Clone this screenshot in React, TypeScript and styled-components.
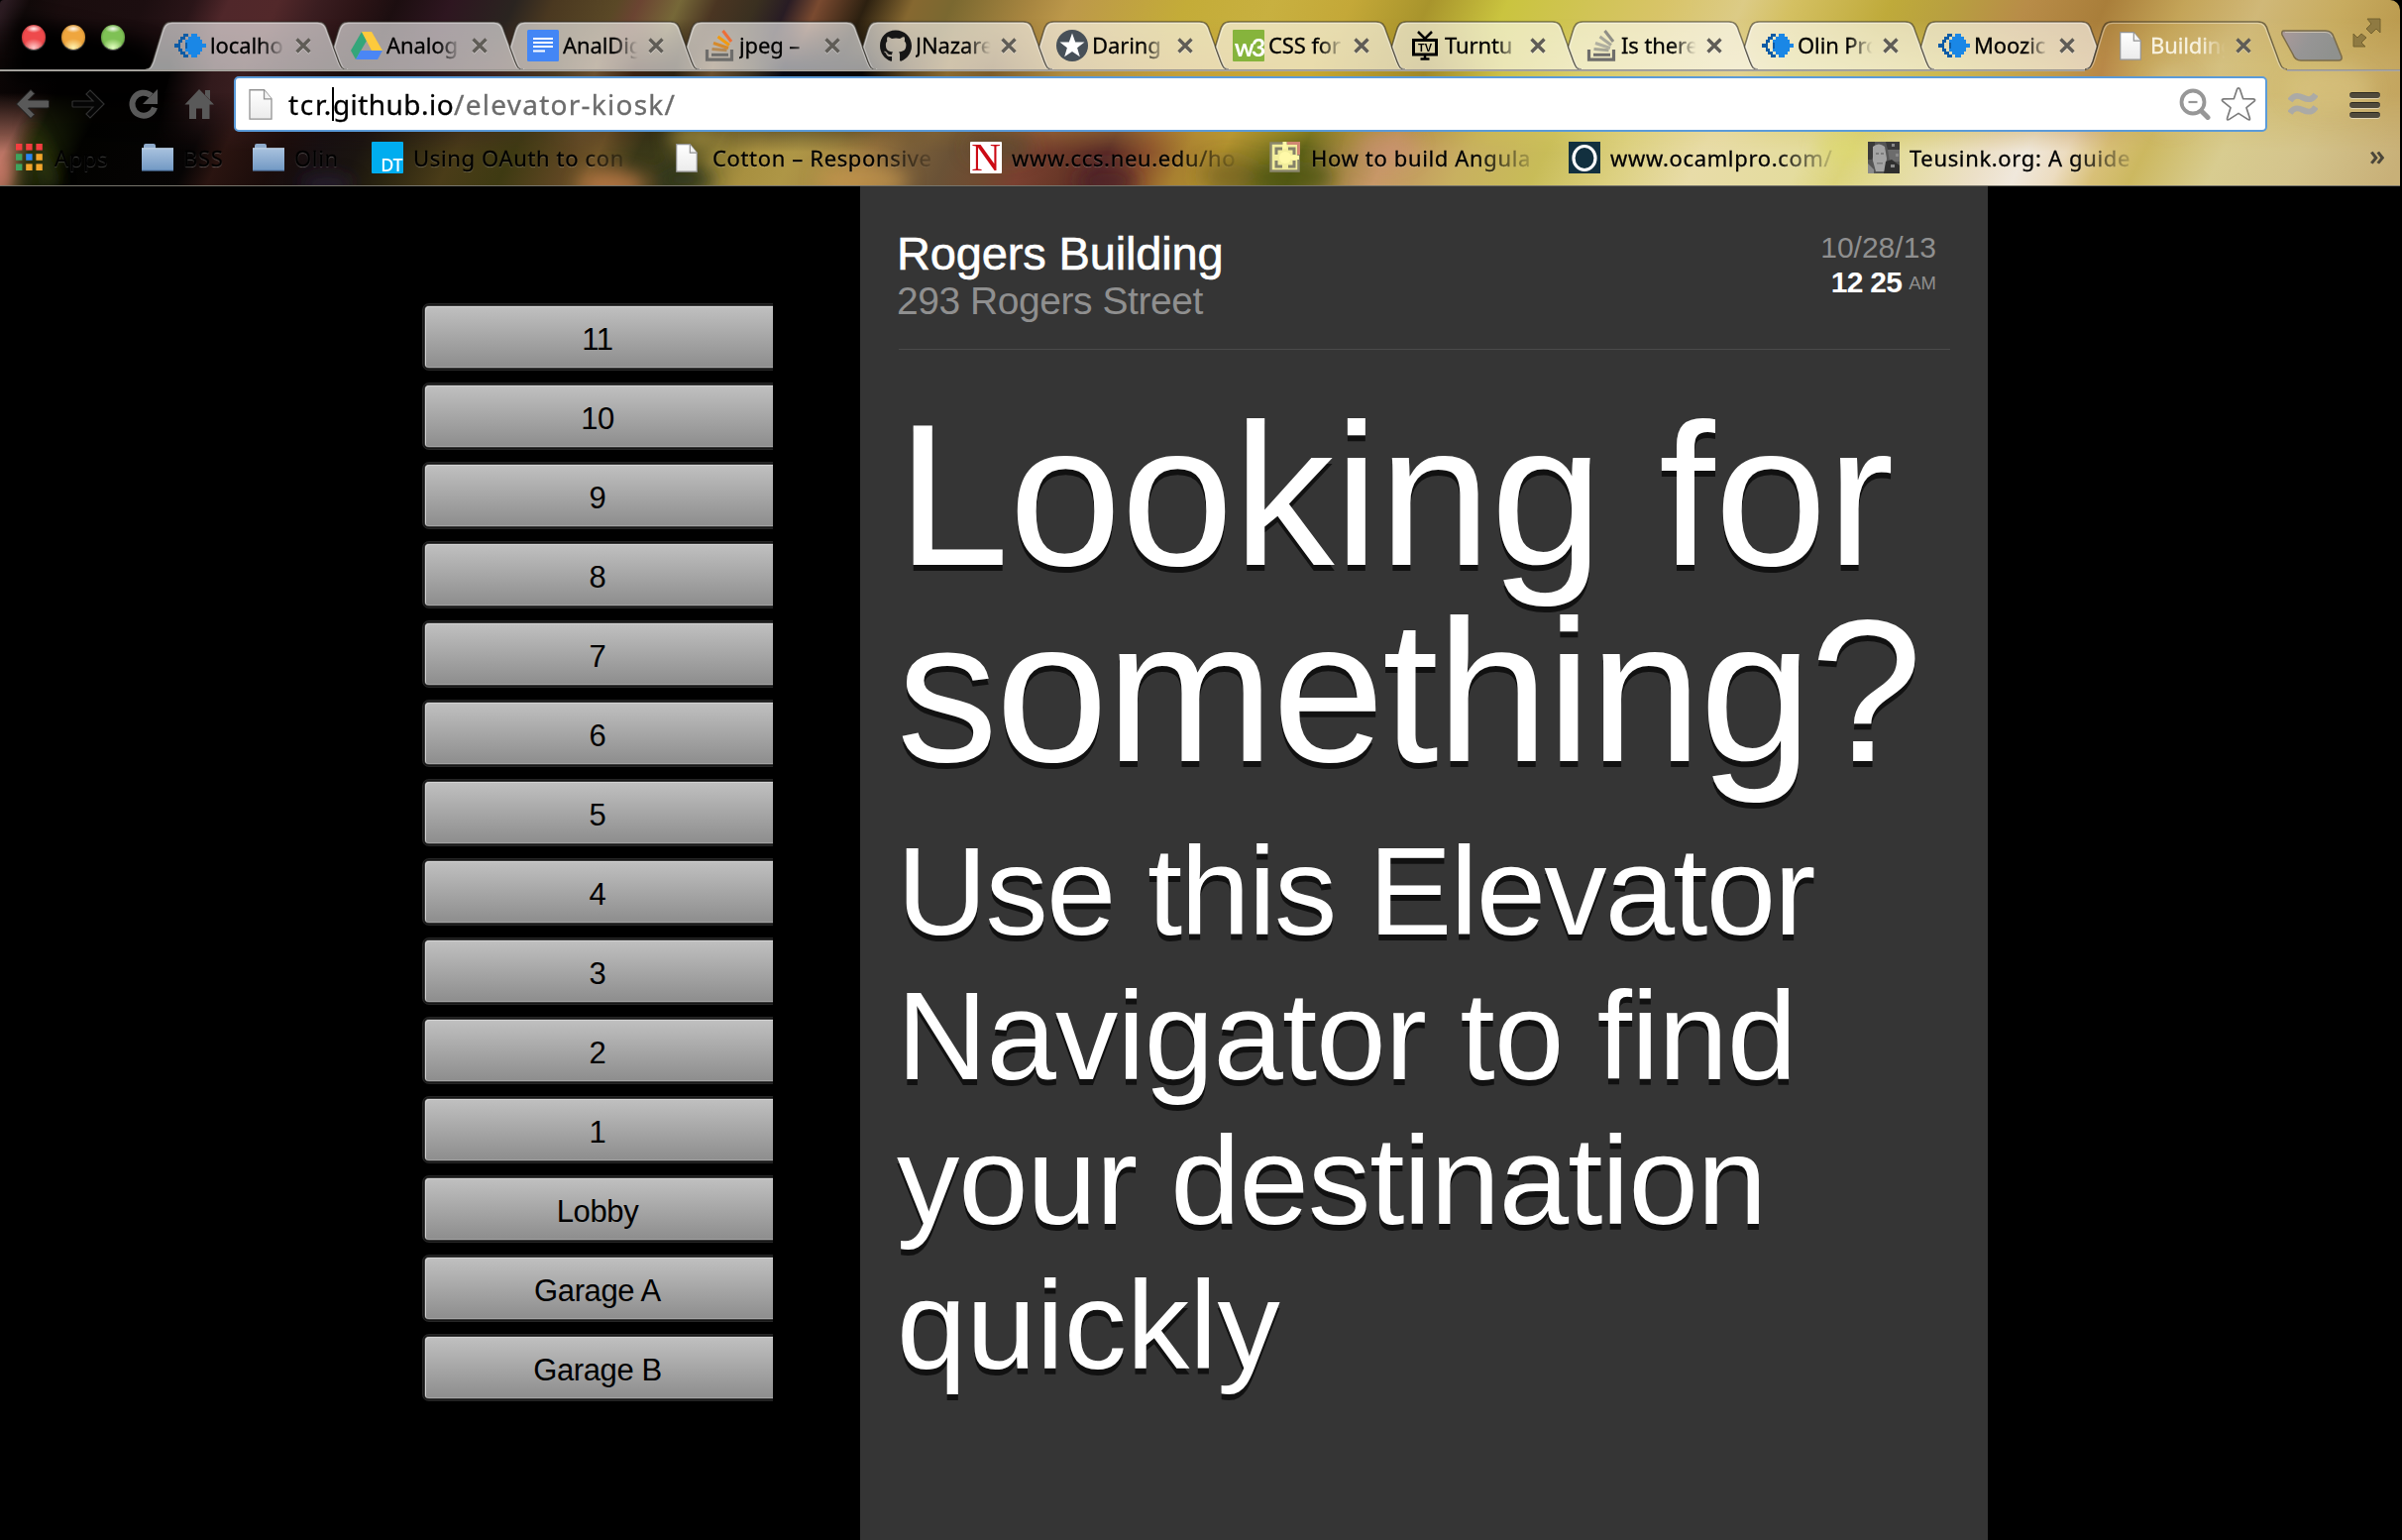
import React from 'react';
import styled, { createGlobalStyle } from 'styled-components';
import { FaGithub } from 'react-icons/fa';

const uiFont = '"Noto Sans", "Open Sans", sans-serif';
const pageFont = '"Liberation Sans", Arial, sans-serif';

const GlobalStyle = createGlobalStyle`
  *, *::before, *::after { box-sizing: border-box; }
  html, body { margin: 0; padding: 0; background: #000; }
  body { overflow: hidden; }
  h1, h2, p, ul { margin: 0; padding: 0; font-weight: 400; }
`;

const Window = styled.div`
  width: 2424px;
  height: 1554px;
  display: flex;
  flex-direction: column;
  background: #000;
  overflow: hidden;
`;

/* ---------- browser chrome ---------- */

const Chrome = styled.header`
  position: relative;
  width: 2422px;
  height: 188px;
  flex: none;
  display: flex;
  flex-direction: column;
  border-bottom: 1px solid #77756c;
  border-radius: 4px 10px 0 0;
  overflow: hidden;
  font-family: ${uiFont};
`;

const ThemePhoto = styled.svg`
  position: absolute;
  inset: 0;
  width: 100%;
  height: 100%;
`;

const TabStrip = styled.div`
  position: relative;
  display: flex;
  height: 72px;
  flex: none;
`;

const WindowControls = styled.div`
  width: 146px;
  display: flex;
  gap: 16px;
  padding: 25px 0 0 22px;
  flex: none;
`;

const Light = styled.span<{ $edge: string; $core: string; $glow: string }>`
  width: 24px;
  height: 25px;
  border-radius: 50%;
  background:
    radial-gradient(ellipse 8px 4px at 50% 16%, rgba(255, 255, 255, 0.9), rgba(255, 255, 255, 0) 100%),
    radial-gradient(ellipse 11px 9px at 50% 92%, ${p => p.$glow}, transparent 100%),
    radial-gradient(circle at 50% 50%, ${p => p.$core} 55%, ${p => p.$edge} 100%);
  box-shadow: 0 1px 1px rgba(255, 255, 255, 0.35);
`;

const TabItem = styled.div`
  position: relative;
  width: 178px;
  flex: none;
  display: flex;
  align-items: center;
  padding: 20px 0 0 30px;
`;

const TabShape = styled.svg`
  position: absolute;
  left: 0;
  top: 20px;
  width: 206px;
  height: 52px;
  overflow: visible;
`;

const IconBox = styled.span`
  position: relative;
  width: 32px;
  height: 32px;
  flex: none;
  display: flex;
  align-items: center;
  justify-content: center;
`;

const TabLabel = styled.span<{ $light?: boolean }>`
  position: relative;
  width: 78px;
  margin: -2px 0 0 4px;
  overflow: hidden;
  white-space: nowrap;
  font-size: 22px;
  line-height: 30px;
  letter-spacing: -0.1px;
  color: ${p => (p.$light ? '#f8f2e0' : '#000')};
  -webkit-text-stroke: 0.3px currentColor;
  mask-image: linear-gradient(90deg, #000 66%, transparent 97%);
`;

const CloseMark = styled.svg`
  position: relative;
  width: 16px;
  height: 16px;
  margin-left: 8px;
  flex: none;
  filter: drop-shadow(0 1px 0 rgba(255, 255, 255, 0.4));
`;

const StripEnd = styled.div`
  position: relative;
  flex: 1;
  display: flex;
  padding-left: 18px;
`;

const NewTab = styled.svg`
  width: 66px;
  height: 34px;
  margin-top: 29px;
`;

const FullScreen = styled.svg`
  width: 29px;
  height: 30px;
  margin: 18px 0 0 8px;
`;

const Toolbar = styled.div`
  position: relative;
  display: flex;
  align-items: center;
  height: 66px;
  flex: none;
  padding-left: 15px;
`;

const NavIcon = styled.svg`
  width: 36px;
  height: 36px;
  margin-right: 20px;
  flex: none;
`;

const Omnibox = styled.div`
  display: flex;
  align-items: center;
  width: 2052px;
  height: 56px;
  margin-left: -3px;
  padding-left: 13px;
  flex: none;
  background: #fff;
  border: 2px solid #5b9bd9;
  border-radius: 5px;
`;

const Url = styled.div`
  flex: 1;
  display: flex;
  align-items: center;
  padding-left: 16px;
  font-size: 28px;
  line-height: 38px;
  white-space: nowrap;
  color: #000;
`;

const Host = styled.span<{ $tracking: number }>`
  letter-spacing: ${p => p.$tracking}px;
  -webkit-text-stroke: 0.3px currentColor;
`;

const Path = styled.span`
  letter-spacing: 1.25px;
  color: #6c6c6c;
  -webkit-text-stroke: 0.3px currentColor;
`;

const Caret = styled.i`
  width: 2px;
  height: 34px;
  margin: 0 -1px;
  background: #000;
`;

const ZoomGlyph = styled.svg`
  width: 32px;
  height: 32px;
  margin-right: 10px;
`;

const StarGlyph = styled.svg`
  width: 36px;
  height: 36px;
  margin-right: 9px;
`;

const Waves = styled.svg`
  width: 30px;
  height: 26px;
  margin-left: 21px;
`;

const Menu = styled.span`
  display: flex;
  flex-direction: column;
  gap: 4px;
  margin: 1px 0 0 32px;
`;

const MenuBar = styled.i`
  width: 31px;
  height: 6px;
  border-radius: 3px;
  background: #504a3c;
  border-top: 1px solid #2b281f;
  box-shadow: 0 1px 0 rgba(255, 255, 255, 0.45);
`;

const BookmarkBar = styled.div`
  position: relative;
  display: flex;
  height: 42px;
  flex: none;
  padding-left: 13px;
`;

const Bookmark = styled.div<{ $width: number }>`
  display: flex;
  align-items: center;
  width: ${p => p.$width}px;
  flex: none;
`;

const BookmarkLabel = styled.span<{ $fade?: boolean }>`
  margin-left: 10px;
  width: ${p => (p.$fade ? '236px' : 'auto')};
  overflow: hidden;
  white-space: nowrap;
  font-size: 22px;
  line-height: 30px;
  letter-spacing: 0.65px;
  color: #000;
  -webkit-text-stroke: 0.3px #000;
  text-shadow: 0 1px 1px rgba(255, 255, 255, 0.28);
  mask-image: ${p => (p.$fade ? 'linear-gradient(90deg, #000 70%, transparent 99%)' : 'none')};
`;

const Overflow = styled.span`
  margin-left: 204px;
  font-size: 28px;
  line-height: 36px;
  color: #4b463a;
  font-weight: 600;
`;

const Tile = styled.span<{ $bg: string; $fg: string }>`
  width: 32px;
  height: 32px;
  display: flex;
  align-items: flex-end;
  justify-content: flex-end;
  background: ${p => p.$bg};
  color: ${p => p.$fg};
  border-radius: 1px;
`;

const DtText = styled.span`
  font: 500 18px/18px ${uiFont};
  letter-spacing: -0.5px;
  padding-right: 1px;
`;

const NText = styled.span`
  width: 32px;
  text-align: center;
  font: 400 41px/33px "Liberation Serif", serif;
`;

const W3Text = styled.span`
  width: 32px;
  text-align: center;
  font: 700 25px/30px "Lato", sans-serif;
  letter-spacing: -3px;
`;

/* ---------- kiosk page ---------- */

const Kiosk = styled.main`
  flex: 1;
  display: flex;
  background: #000;
  font-family: ${pageFont};
`;

const FloorList = styled.nav`
  width: 780px;
  flex: none;
  display: flex;
  flex-direction: column;
  gap: 18px;
  padding: 121px 0 0 429px;
  overflow: hidden;
`;

const FloorButton = styled.button`
  height: 62px;
  flex: none;
  padding: 5px 3px 0 0;
  border: 0;
  border-radius: 4px 0 0 4px;
  background: linear-gradient(#c0c0c0, #8d8d8d);
  box-shadow:
    inset 1px 1px 0 #d2d2d2,
    inset 0 -1px 0 #a2a2a2,
    0 0 0 1px #3a3a3a,
    0 0 0 2px #161616,
    0 0 0 3px #262626;
  color: #000;
  font-family: ${pageFont};
  font-size: 31px;
  line-height: 36px;
  letter-spacing: -0.4px;
`;

const Panel = styled.section`
  width: 1138px;
  margin-left: 88px;
  flex: none;
  padding: 44px 38px 0 37px;
  background: #353535;
`;

const PanelHeader = styled.div`
  display: flex;
  justify-content: space-between;
  height: 120px;
`;

const BuildingName = styled.h1`
  font-size: 47px;
  line-height: 48px;
  letter-spacing: -0.15px;
  color: #fff;
  -webkit-text-stroke: 0.6px #fff;
`;

const Address = styled.p`
  font-size: 39px;
  line-height: 47px;
  letter-spacing: -0.45px;
  color: #8f8f8f;
`;

const Clock = styled.div`
  padding: 1px 14px 0 0;
  text-align: right;
  font-size: 30px;
  line-height: 34px;
  color: #8f8f8f;
`;

const Time = styled.div`
  display: flex;
  justify-content: flex-end;
  align-items: center;
  gap: 7px;
  margin-top: -1px;
`;

const Digits = styled.b`
  color: #fff;
  letter-spacing: -0.7px;
`;

const Meridiem = styled.span`
  font-size: 18.5px;
  line-height: 34px;
  padding-top: 3px;
`;

const Divider = styled.div`
  height: 1px;
  margin-left: 2px;
  background: #4a4a4a;
`;

const Headline = styled.h2`
  margin-top: 47px;
  font-size: 204px;
  line-height: 198px;
  color: #fff;
  text-shadow: 0 6px 0 #111;
`;

const Intro = styled.p`
  margin-top: 30px;
  font-size: 126.5px;
  line-height: 146px;
  color: #fff;
  text-shadow: 0 6px 0 #111;
`;

const Line = styled.span<{ $tracking: number }>`
  display: block;
  white-space: nowrap;
  letter-spacing: ${p => p.$tracking}px;
`;

/* ---------- theme photo data ---------- */

type Stop = [number, string];

const topBand: Stop[] = [
  [0, '#2c1c22'], [24, '#120a0a'], [60, '#1a0d0e'], [140, '#1c0e10'], [190, '#2a1518'], [225, '#50272a'], [275, '#52282a'],
  [316, '#3a1d20'], [356, '#2c1416'], [395, '#1c0e10'], [450, '#2e1620'], [514, '#2a2420'], [553, '#4a3820'],
  [617, '#5a4826'], [640, '#6b4432'], [680, '#766838'], [718, '#4a3522'], [758, '#3a3020'], [790, '#281c24'],
  [821, '#7a4a30'], [869, '#2c2010'], [916, '#866830'], [956, '#7a6830'], [1035, '#a88640'], [1075, '#bc984a'],
  [1193, '#c4ac38'], [1279, '#c8b040'], [1358, '#c4a838'], [1437, '#a8942c'], [1516, '#cac43f'], [1595, '#d0c454'],
  [1674, '#d8c468'], [1754, '#dccb86'], [1804, '#d4c062'], [1903, '#bfaa3a'], [1962, '#b8a040'], [2041, '#b88c48'],
  [2120, '#a97e3a'], [2199, '#c4a458'], [2278, '#d0b878'], [2357, '#c8ac60'], [2422, '#bc9c50'],
];

const midBand: Stop[] = [
  [0, '#0c0606'], [60, '#020101'], [170, '#020101'], [215, '#321a1c'], [245, '#3a1e20'], [290, '#2a1416'], [350, '#1a0d0c'],
  [420, '#261418'], [500, '#3a2420'], [560, '#4a3820'], [600, '#6a5030'], [640, '#3a2212'], [680, '#2c2212'],
  [718, '#6a5030'], [758, '#3a3020'], [790, '#080812'], [870, '#080604'], [916, '#5a4420'], [956, '#8a6a30'],
  [1000, '#7c5c2a'], [1075, '#b08c40'], [1193, '#c4a038'], [1279, '#c8a634'], [1320, '#c8a830'], [1437, '#a08828'],
  [1516, '#ccc048'], [1595, '#d8cc68'], [1754, '#e2d290'], [1804, '#d8cc72'], [1962, '#ccb850'], [2080, '#c09848'],
  [2120, '#b88848'], [2160, '#c6a65c'], [2239, '#d4c080'], [2318, '#d0ba70'], [2422, '#c4a660'],
];

const lowBand: Stop[] = [
  [0, '#b07060'], [16, '#5a4428'], [26, '#28300e'], [50, '#161c06'], [75, '#020200'], [190, '#060404'], [221, '#2a1410'],
  [277, '#1a0c0a'], [316, '#171012'], [356, '#1a1410'], [395, '#2a2410'], [455, '#4a3c18'], [514, '#3e3a12'],
  [573, '#5e4622'], [600, '#6e5428'], [640, '#3a3818'], [690, '#3c3c1a'], [718, '#8a7a34'], [758, '#a89040'],
  [798, '#ae9646'], [837, '#a88c44'], [877, '#9a7640'], [910, '#7c603a'], [956, '#6a5236'], [1000, '#704a30'],
  [1035, '#7a4030'], [1075, '#6a3828'], [1114, '#5a2c28'], [1154, '#8a502c'], [1193, '#a88030'], [1230, '#b09030'],
  [1279, '#7a7420'], [1310, '#5c6018'], [1350, '#a08440'], [1398, '#c89868'], [1437, '#c4a060'], [1477, '#c8b060'],
  [1556, '#c8bc58'], [1635, '#dcd080'], [1714, '#e8dca8'], [1817, '#e4dc9e'], [1863, '#dcd47c'], [1923, '#e4dca0'],
  [2002, '#ece0c8'], [2041, '#f0e8dc'], [2081, '#ecdcc0'], [2120, '#d8c078'], [2160, '#ccb860'], [2239, '#d8cc90'],
  [2318, '#d4c48c'], [2422, '#c8b078'],
];

const Band = ({ id, stops, lean }: { id: string; stops: Stop[]; lean: string }) => (
  <linearGradient id={id} gradientUnits="userSpaceOnUse" x1="0" y1="0" x2="2422" y2="0" gradientTransform={lean}>
    {stops.map(([x, c]) => <stop key={x} offset={x / 2422} stopColor={c} />)}
  </linearGradient>
);

const Photo = () => (
  <ThemePhoto viewBox="0 0 2422 188" preserveAspectRatio="none">
    <defs>
      <Band id="bandTop" stops={topBand} lean="translate(0 15) skewX(-24) translate(0 -15)" />
      <Band id="bandMid" stops={midBand} lean="translate(0 75) skewX(-12) translate(0 -75)" />
      <Band id="bandLow" stops={lowBand} lean="translate(0 162) skewX(-26) translate(0 -162)" />
      <linearGradient id="fadeMid" x1="0" y1="0" x2="0" y2="1">
        <stop offset="0.1" stopColor="#000" />
        <stop offset="0.36" stopColor="#fff" />
      </linearGradient>
      <linearGradient id="fadeLow" x1="0" y1="0" x2="0" y2="1">
        <stop offset="0.5" stopColor="#000" />
        <stop offset="0.82" stopColor="#fff" />
      </linearGradient>
      <mask id="maskMid"><rect width="2422" height="188" fill="url(#fadeMid)" /></mask>
      <mask id="maskLow"><rect width="2422" height="188" fill="url(#fadeLow)" /></mask>
      <filter id="soft" x="-50%" y="-50%" width="200%" height="200%"><feGaussianBlur stdDeviation="9" /></filter>
    </defs>
    <rect width="2422" height="188" fill="url(#bandTop)" />
    <rect width="2422" height="188" fill="url(#bandMid)" mask="url(#maskMid)" />
    <rect width="2422" height="188" fill="url(#bandLow)" mask="url(#maskLow)" />
    <g filter="url(#soft)">
      <path d="M18 18 L150 46 L150 80 L12 80 Z" fill="#000" />
      <ellipse cx="2" cy="180" rx="12" ry="26" fill="#d88070" opacity="0.8" />
      <path d="M30 120 L60 190 L46 190 Z" fill="#3c4a14" />
      <ellipse cx="330" cy="188" rx="26" ry="9" fill="#30284c" opacity="0.6" />
      <ellipse cx="618" cy="188" rx="34" ry="16" fill="#c8804a" opacity="0.8" />
      <ellipse cx="690" cy="182" rx="30" ry="14" fill="#30381a" />
      <ellipse cx="700" cy="140" rx="26" ry="12" fill="#b09a44" opacity="0.7" />
      <ellipse cx="870" cy="184" rx="46" ry="18" fill="#c8984e" opacity="0.7" />
      <ellipse cx="1010" cy="150" rx="34" ry="12" fill="#5c4a30" opacity="0.8" />
      <ellipse cx="1118" cy="184" rx="30" ry="18" fill="#4c2028" opacity="0.8" />
      <ellipse cx="1240" cy="178" rx="30" ry="18" fill="#6e5a1c" opacity="0.6" />
      <ellipse cx="1304" cy="180" rx="44" ry="16" fill="#4e5414" opacity="0.8" />
      <ellipse cx="1400" cy="150" rx="30" ry="16" fill="#c89070" opacity="0.6" />
      <ellipse cx="1860" cy="150" rx="26" ry="16" fill="#dcd86c" opacity="0.6" />
      <ellipse cx="2190" cy="100" rx="24" ry="30" fill="#dccb90" opacity="0.5" />
      <ellipse cx="2350" cy="90" rx="44" ry="22" fill="#dcc888" opacity="0.5" />
    </g>
  </ThemePhoto>
);

/* ---------- icons ---------- */

const Pixels = () => (
  <svg width="32" height="26" viewBox="0 0 32 26">
    <path d="M9 1h5v3h-3v3H8v3H6v6h2v3h3v3h3v3H9v-3H6v-3H4v-4H0V11h4V7h2V4h3z" fill="#0d5ba5" />
    <path d="M14 4h3V1h6v3h3v3h2v4h4v4h-4v4h-2v3h-3v3h-6v-3h-3v-3h-3V7h3z" fill="#1a87e6" />
    <path d="M11 10h2v6h-2z" fill="#0d5ba5" />
  </svg>
);

const Drive = () => (
  <svg width="32" height="28" viewBox="0 0 32 28">
    <path d="M11 0 0 19l5 9L16 9z" fill="#34a67a" />
    <path d="M11 0h10l11 19H21z" fill="#fdca3d" />
    <path d="M10 19h22l-5 9H5z" fill="#4a86f5" />
  </svg>
);

const Docs = () => (
  <svg width="32" height="32" viewBox="0 0 32 32">
    <rect width="32" height="32" rx="1.5" fill="#4386f5" />
    <path d="M6 9h20M6 13h20M6 17h20M6 21.500h12" stroke="#fff" strokeWidth="2" />
  </svg>
);

const Stack = ({ muted }: { muted?: boolean }) => (
  <svg width="32" height="32" viewBox="0 0 32 32" fill="none">
    <path d="M3.500 20v10.200h25V20" stroke="#6e6d6b" strokeWidth="3.200" />
    <path d="M8 25.300h17" stroke="#6e6d6b" strokeWidth="3" />
    <path d="M8.500 19.500l15 1.200" stroke={muted ? '#a6a596' : '#b58a55'} strokeWidth="3" />
    <path d="M10 13.500l15 5" stroke={muted ? '#b0afa0' : '#d68a2c'} strokeWidth="3" />
    <path d="M14.500 7l11.500 8.500" stroke={muted ? '#a8a79a' : '#f29a10'} strokeWidth="3" />
    <path d="M19.500 1l8.500 11" stroke={muted ? '#8f8e86' : '#ee6e37'} strokeWidth="3" />
  </svg>
);

const StarBadge = () => (
  <svg width="32" height="32" viewBox="0 0 32 32">
    <circle cx="16" cy="16" r="16" fill="#475058" />
    <path d="M16 3.500l3.200 9h9.300l-7.400 5.700 2.700 9L16 21.900l-7.800 5.300 2.700-9-7.400-5.700h9.300z" fill="#fff" />
  </svg>
);

const Tv = () => (
  <svg width="26" height="30" viewBox="0 0 26 30">
    <path d="M6 1l7 7 7-7" stroke="#000" strokeWidth="2.500" fill="none" />
    <path d="M1.500 9.500h23v14.500h-23z" stroke="#000" strokeWidth="3" fill="none" />
    <path d="M13 24v5M8.500 28.500h9" stroke="#000" strokeWidth="2.500" />
    <text x="13" y="21.300" textAnchor="middle" fontFamily="Liberation Sans, sans-serif" fontWeight="700" fontSize="11">TV</text>
  </svg>
);

const PageGlyph = ({ w = 22, h = 29 }: { w?: number; h?: number }) => (
  <svg width={w} height={h} viewBox="0 0 22 29">
    <defs>
      <linearGradient id="paper" x1="0" y1="0" x2="0" y2="1">
        <stop offset="0" stopColor="#fff" /><stop offset="1" stopColor="#ebebeb" />
      </linearGradient>
    </defs>
    <path d="M.7.7h13.600l7 8.500v19H.7z" fill="url(#paper)" stroke="#929292" strokeWidth="1.200" />
    <path d="M14.300.7v8.500h7" fill="#f4f4f4" stroke="#929292" strokeWidth="1.200" />
  </svg>
);

const Folder = () => (
  <svg width="32" height="28" viewBox="0 0 32 28">
    <defs>
      <linearGradient id="folder" x1="0" y1="0" x2="0" y2="1">
        <stop offset="0" stopColor="#a9c2de" /><stop offset="1" stopColor="#7299c4" />
      </linearGradient>
    </defs>
    <path d="M2 5V2q0-2 2-2h8q2 0 2 2v3z" fill="#8fabcb" />
    <path d="M0 4.500h32V27H0z" fill="url(#folder)" />
    <path d="M0 4.800h32" stroke="#c3d6ea" />
    <path d="M0 27h32" stroke="#577fad" strokeWidth="1.200" />
  </svg>
);

const appColors = ['#f33d3f', '#f33d3f', '#f33d3f', '#3fa35d', '#2a86f2', '#f3a52b', '#3fa35d', '#f3a52b', '#f3a52b'];

const Apps = () => (
  <svg width="28" height="28" viewBox="0 0 28 28">
    {appColors.map((c, i) => (
      <rect key={i} x={1 + (i % 3) * 10.200} y={Math.floor(i / 3) * 10.200} width="6.400" height="6.600" fill={c} />
    ))}
  </svg>
);

const Target = () => (
  <svg width="32" height="32" viewBox="0 0 32 32">
    <rect x="1.500" y="1.500" width="28" height="28" fill="#f3ee9c" stroke="#8b876d" strokeWidth="2.500" />
    <path d="M18 1.500h11.500V13" stroke="#cf8672" strokeWidth="3" fill="none" />
    <path d="M7 13V7h6M19 7h6v6M25 19v6h-6M13 25H7v-6" stroke="#85826a" strokeWidth="3" fill="none" />
    <path d="M15.500 0v7M22 16h8" stroke="#fff8a6" strokeWidth="4" />
    <circle cx="16" cy="16" r="6" fill="#fff9a8" />
  </svg>
);

const Ring = () => (
  <svg width="32" height="32" viewBox="0 0 32 32">
    <rect width="32" height="32" fill="#12303f" />
    <ellipse cx="16" cy="16.500" rx="11" ry="12" fill="none" stroke="#fff" strokeWidth="3.200" />
  </svg>
);

const Portrait = () => (
  <svg width="32" height="32" viewBox="0 0 32 32">
    <rect width="32" height="32" fill="#555" />
    <path d="M0 0h7v10l-3 8H0zM18 0h14v8H20z" fill="#3a3a3a" />
    <path d="M20 8h12v12H22z" fill="#6c6c6c" />
    <path d="M5 5q6-5 12 0l2 12-2 13H8L5 19z" fill="#a4a4a4" />
    <path d="M8 11h3v2H8zM13 11h3v2h-3zM9 21h6v1.500H9z" fill="#7c7c7c" />
    <path d="M18 20l6-2 8 6v8H16z" fill="#2f2f2f" />
    <path d="M0 22l6 6v4H0z" fill="#8a8a8a" />
    <path d="M24 2h3v3h-3zM28 12h3v3h-3zM23 23h4v3h-4z" fill="#8a8a8a" />
  </svg>
);

/* ---------- data ---------- */

const tabs: { label: string; icon: React.ReactNode }[] = [
  { label: 'localho', icon: <Pixels /> },
  { label: 'Analog', icon: <Drive /> },
  { label: 'AnalDig', icon: <Docs /> },
  { label: 'jpeg –', icon: <Stack /> },
  { label: 'JNazare', icon: <FaGithub size={33} color="#161616" /> },
  { label: 'Daring', icon: <StarBadge /> },
  { label: 'CSS for', icon: <Tile $bg="#86b43c" $fg="#fff"><W3Text>w3</W3Text></Tile> },
  { label: 'Turntu', icon: <Tv /> },
  { label: 'Is there', icon: <Stack muted /> },
  { label: 'Olin Pro', icon: <Pixels /> },
  { label: 'Moozic', icon: <Pixels /> },
  { label: 'Building', icon: <PageGlyph /> },
];

const bookmarks: { label: string; width: number; fade?: boolean; icon: React.ReactNode }[] = [
  { label: 'Apps', width: 130, icon: <Apps /> },
  { label: 'BSS', width: 112, icon: <Folder /> },
  { label: 'Olin', width: 120, icon: <Folder /> },
  { label: 'Using OAuth to con', width: 302, fade: true, icon: <Tile $bg="#00adef" $fg="#fff"><DtText>DT</DtText></Tile> },
  { label: 'Cotton – Responsive', width: 302, fade: true, icon: <PageGlyph /> },
  { label: 'www.ccs.neu.edu/ho', width: 302, fade: true, icon: <Tile $bg="#fff" $fg="#cc0a14"><NText>N</NText></Tile> },
  { label: 'How to build Angula', width: 302, fade: true, icon: <Target /> },
  { label: 'www.ocamlpro.com/', width: 302, fade: true, icon: <Ring /> },
  { label: 'Teusink.org: A guide', width: 302, fade: true, icon: <Portrait /> },
];

const floors = ['11', '10', '9', '8', '7', '6', '5', '4', '3', '2', '1', 'Lobby', 'Garage A', 'Garage B'];

const leftFull = 'M0 50C5 50 6 47 8 42L17 12C19 5 21 2 27 2';
const leftTucked = 'M26 50C21 50 20 47 18 42L12.500 27L17 12C19 5 21 2 27 2';
const rightFull = 'H175C181 2 183 5 185 12L196 42C198 47 199 50 204 50';
const rightTucked = 'H175C181 2 183 5 185 12L190.500 27L186 42C184 47 183 50 178 50';

const TabOutline = ({ index }: { index: number }) => {
  const active = index === tabs.length - 1;
  const beforeActive = index === tabs.length - 2;
  const d = (index === 0 || active ? leftFull : leftTucked) + (beforeActive ? rightTucked : rightFull);
  return (
    <TabShape viewBox="0 0 206 52">
      <path d={d} fill={active ? 'none' : 'rgba(255,255,255,0.6)'} stroke="rgba(40,36,30,0.55)" strokeWidth="1.600" />
      <path d={d} transform="translate(1.500 1.500) scale(0.986 0.97)" fill="none" stroke="rgba(255,255,255,0.35)" strokeWidth="1.400" />
    </TabShape>
  );
};

/* The strip's lower edge, open beneath the selected tab. */
const Rule = styled.div`
  position: relative;
  display: flex;
  justify-content: space-between;
  height: 2px;
  margin-top: -2px;
`;

const RulePart = styled.i<{ $width: number }>`
  width: ${p => p.$width}px;
  background: linear-gradient(#8f8c88, #b5b2ac);
`;

const BrowserChrome = () => (
  <Chrome>
    <Photo />
    <TabStrip>
      <WindowControls>
        <Light $edge="#8d1f22" $core="#ee4a4c" $glow="#ffc9c9" />
        <Light $edge="#8f5c17" $core="#efa63e" $glow="#fff3b0" />
        <Light $edge="#3c6a25" $core="#7fc155" $glow="#e2ffc0" />
      </WindowControls>
      {tabs.map((tab, i) => (
        <TabItem key={i}>
          <TabOutline index={i} />
          <IconBox>{tab.icon}</IconBox>
          <TabLabel $light={i === tabs.length - 1}>{tab.label}</TabLabel>
          <CloseMark viewBox="0 0 16 16">
            <path d="M1.500 1.500l13 13M14.500 1.500l-13 13" stroke="#5f5c56" strokeWidth="3.300" />
          </CloseMark>
        </TabItem>
      ))}
      <StripEnd>
        <NewTab viewBox="0 0 66 34">
          <defs>
            <linearGradient id="newTab" x1="0" y1="0" x2="1" y2="0.300">
              <stop offset="0" stopColor="#ab9a9a" /><stop offset="0.500" stopColor="#969595" /><stop offset="1" stopColor="#8f918e" />
            </linearGradient>
          </defs>
          <path d="M5 2H47q6 0 8 6l8 20q1 4-3 4H22q-6 0-8-6L3 6q-1-4 2-4z" fill="url(#newTab)" stroke="#7b6c4a" strokeWidth="1.500" />
          <path d="M6 3.500H46q6 0 7.500 5" fill="none" stroke="#c9bfae" strokeWidth="1" />
        </NewTab>
        <FullScreen viewBox="0 0 29 30">
          <path d="M15 1h13v14l-4-4-5 5-5-5 5-5zM1 16l4 4 4-4 5 4-5 5 4 4H1z" fill="#8f7a42" stroke="#75622f" />
        </FullScreen>
      </StripEnd>
    </TabStrip>
    <Rule><RulePart $width={2104} /><RulePart $width={114} /></Rule>
    <Toolbar>
      <NavIcon viewBox="0 0 36 36">
        <path d="M1.500 18L16 3.500l4 4L13.500 14H33q1.500 0 1.500 1.500v5q0 1.500-1.500 1.500H13.500l6.500 6.500-4 4z" fill="#595959" stroke="#1d1d1d" strokeWidth="1" />
      </NavIcon>
      <NavIcon viewBox="0 0 36 36">
        <path d="M34 18L20 4l-4 4 7 7H3q-1 0-1 1v4q0 1 1 1h20l-7 7 4 4z" fill="#050505" stroke="#303030" strokeWidth="1.200" />
      </NavIcon>
      <NavIcon viewBox="0 0 36 36">
        <path d="M29 21.500A11.500 11.500 0 1 1 25.500 9.500" fill="none" stroke="#595959" strokeWidth="6" />
        <path d="M32 3v15H17z" fill="#595959" />
      </NavIcon>
      <NavIcon viewBox="0 0 36 36">
        <path d="M18 3L33 18.500H28.500V33H21V22.500H15V33H8V18.500H3.500z" fill="#595959" />
        <path d="M24 4h5v10l-5-5z" fill="#595959" />
      </NavIcon>
      <Omnibox>
        <PageGlyph w={24} h={31} />
        <Url>
          <Host $tracking={1.7}>tcr.</Host><Caret /><Host $tracking={0.45}>github.io</Host><Path>/elevator-kiosk/</Path>
        </Url>
        <ZoomGlyph viewBox="0 0 32 32" fill="none" stroke="#979797">
          <circle cx="14" cy="14" r="11.500" strokeWidth="3.800" />
          <path d="M9.500 14h9" strokeWidth="2.200" />
          <path d="M22.500 23l6.500 6.500" strokeWidth="5" strokeLinecap="round" />
        </ZoomGlyph>
        <StarGlyph viewBox="0 0 36 36" fill="#fff" stroke="#7c7c7c" strokeWidth="1.700" strokeLinejoin="round">
          <path d="M18 1.800q1 0 1.600 1.600l3 9.200 10.400.3q2.600.4 1 2.300l-8 6.500 3.400 10.600q.4 2.400-1.700 1.300L18 27.400l-9.700 6.200q-2.100 1.100-1.700-1.300L10 21.700l-8-6.500q-1.600-1.900 1-2.300l10.400-.3 3-9.200q.6-1.600 1.600-1.600z" />
        </StarGlyph>
      </Omnibox>
      <Waves viewBox="0 0 30 26" fill="none" stroke="#abaaa6" strokeWidth="6">
        <path d="M2 9.500C6 3.500 10 4 15 6.500S24 9.500 28 3.500" />
        <path d="M2 22C6 16 10 16.500 15 19S24 22 28 16" />
      </Waves>
      <Menu><MenuBar /><MenuBar /><MenuBar /></Menu>
    </Toolbar>
    <BookmarkBar>
      {bookmarks.map(b => (
        <Bookmark key={b.label} $width={b.width}>
          <IconBox>{b.icon}</IconBox>
          <BookmarkLabel $fade={b.fade}>{b.label}</BookmarkLabel>
        </Bookmark>
      ))}
      <Overflow>»</Overflow>
    </BookmarkBar>
  </Chrome>
);

const KioskPage = () => (
  <Kiosk>
    <FloorList>
      {floors.map(f => <FloorButton key={f}>{f}</FloorButton>)}
    </FloorList>
    <Panel>
      <PanelHeader>
        <div>
          <BuildingName>Rogers Building</BuildingName>
          <Address>293 Rogers Street</Address>
        </div>
        <Clock>
          <div>10/28/13</div>
          <Time><Digits>12 25</Digits><Meridiem>AM</Meridiem></Time>
        </Clock>
      </PanelHeader>
      <Divider />
      <Headline>
        <Line $tracking={-0.3}>Looking for</Line>
        <Line $tracking={-2.2}>something?</Line>
      </Headline>
      <Intro>
        <Line $tracking={-1.8}>Use this Elevator</Line>
        <Line $tracking={-0.8}>Navigator to find</Line>
        <Line $tracking={-1}>your destination</Line>
        <Line $tracking={0}>quickly</Line>
      </Intro>
    </Panel>
  </Kiosk>
);

export default function App() {
  return (
    <Window>
      <GlobalStyle />
      <BrowserChrome />
      <KioskPage />
    </Window>
  );
}
